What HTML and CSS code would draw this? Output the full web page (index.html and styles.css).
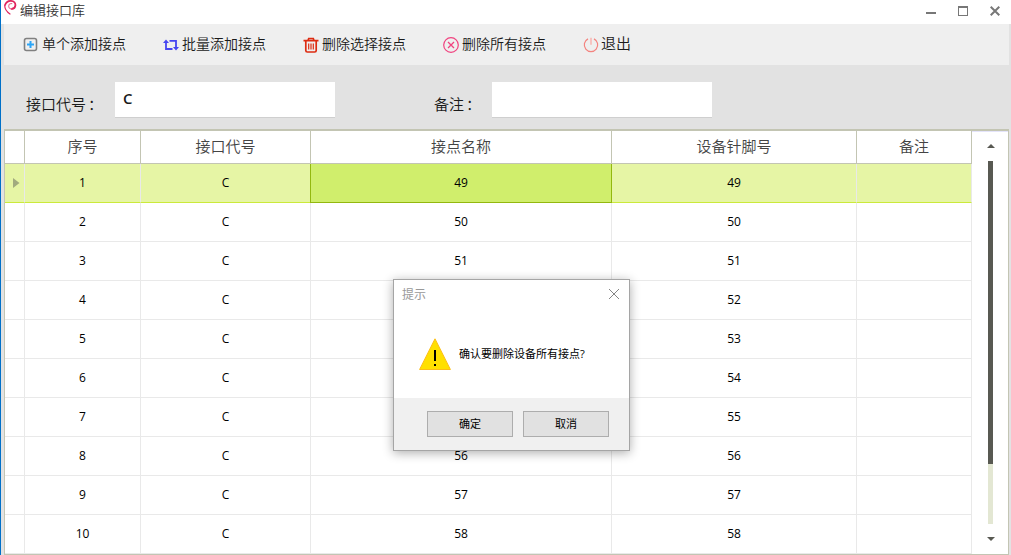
FILE: index.html
```html
<!DOCTYPE html>
<html lang="zh-CN">
<head>
<meta charset="utf-8">
<title>编辑接口库</title>
<link rel="stylesheet" href="styles.css">
</head>
<body>
<div class="window">
  <header class="titlebar">
    <svg class="logo" width="14" height="16" viewBox="0 0 14 16" fill="none" stroke="#e0245e" stroke-linecap="round"><path stroke-width="1.200" d="M6 14C2.500 11.500.6 8.500.800 5.500"/><path stroke-width="1.800" d="M1 5C2.200 2 4.500.8 7 .9c3 .1 4.600 2 4.400 4.500-.2 2.100-1.700 3.500-3.700 3.600"/><path stroke="#e86a90" stroke-width="1.100" d="M7.700 9C5.900 9 4.700 7.800 4.700 6.200c0-1.700 1.300-2.900 3.100-2.600"/></svg>
    <h1 class="title">编辑接口库</h1>
    <div class="controls">
      <svg width="10" height="12" viewBox="0 0 10 12"><path d="M0 7h10v2H0z" fill="#777"/></svg>
      <svg width="10" height="12" viewBox="0 0 10 12"><path d="M0 1h10v10H0zM1 3v7h8V3z" fill="#777" fill-rule="evenodd"/></svg>
      <svg width="10" height="12" viewBox="0 0 10 12"><path d="M.7 1.700l8.600 8.600M9.300 1.700L.7 10.300" stroke="#777" stroke-width="2"/></svg>
    </div>
  </header>
  <nav class="toolbar">
    <div class="tool"><svg width="16" height="16" viewBox="0 0 16 16"><rect x="1.500" y="1.500" width="12" height="12" rx="2" fill="none" stroke="#808080" stroke-width="1.600"/><path d="M7.500 4v7M4 7.500h7" stroke="#2ba5f7" stroke-width="2"/></svg><span>单个添加接点</span></div>
    <div class="tool"><svg width="16" height="16" viewBox="0 0 16 16" fill="none" stroke="#4646f0" stroke-width="1.800"><path d="M3 4.500V12h6.500M6.500 3.800H13V11.500"/><path d="M0 6L3 2.500l3 3.500zM10 10L13 13.500l3-3.500z" fill="#4646f0" stroke="none"/></svg><span>批量添加接点</span></div>
    <div class="tool"><svg width="16" height="16" viewBox="0 0 16 16" fill="none" stroke="#dd2c12"><path stroke-width="1.700" d="M.5 3.700h15M5 3.500l.7-2h4.600l.7 2M2.800 4v9.500q0 1.500 1.500 1.500h7.400q1.500 0 1.500-1.500V4"/><path stroke-width="1.200" d="M5.700 6.500v6M8 6.500v6M10.300 6.500v6"/></svg><span>删除选择接点</span></div>
    <div class="tool"><svg width="16" height="16" viewBox="0 0 16 16" fill="none" stroke="#f0437f"><circle cx="8" cy="8" r="7.300" stroke-width="1.200"/><path stroke-width="1.300" d="M5 5l6 6M11 5l-6 6"/></svg><span>删除所有接点</span></div>
    <div class="tool exit"><svg width="16" height="16" viewBox="0 0 16 16" fill="none" stroke="#f4837f"><path stroke-width="1.200" d="M5 1.900a6.700 6.700 0 1 0 6 0"/><path stroke="#f9b5b1" stroke-width="1.500" d="M8 .8v7"/></svg><span>退出</span></div>
  </nav>
  <section class="form">
    <label class="field code"><span class="label">接口代号<span class="colon">：</span></span><span class="input">C</span></label>
    <label class="field note"><span class="label">备注<span class="colon">：</span></span><span class="input"></span></label>
  </section>
  <main class="grid">
    <div class="table">
      <div class="row head"><div></div><div>序号</div><div>接口代号</div><div>接点名称</div><div>设备针脚号</div><div>备注</div></div>
      <div class="row selected"><div><svg class="marker" width="7" height="10" viewBox="0 0 7 10"><path d="M0 0l6.500 5L0 10z" fill="#a2ab7e"/></svg></div><div>1</div><div>C</div><div class="current">49</div><div>49</div><div></div></div>
      <div class="row"><div></div><div>2</div><div>C</div><div>50</div><div>50</div><div></div></div>
      <div class="row"><div></div><div>3</div><div>C</div><div>51</div><div>51</div><div></div></div>
      <div class="row"><div></div><div>4</div><div>C</div><div>52</div><div>52</div><div></div></div>
      <div class="row"><div></div><div>5</div><div>C</div><div>53</div><div>53</div><div></div></div>
      <div class="row"><div></div><div>6</div><div>C</div><div>54</div><div>54</div><div></div></div>
      <div class="row"><div></div><div>7</div><div>C</div><div>55</div><div>55</div><div></div></div>
      <div class="row"><div></div><div>8</div><div>C</div><div>56</div><div>56</div><div></div></div>
      <div class="row"><div></div><div>9</div><div>C</div><div>57</div><div>57</div><div></div></div>
      <div class="row"><div></div><div>10</div><div>C</div><div>58</div><div>58</div><div></div></div>
    </div>
    <div class="scrollbar">
      <svg width="8" height="4" viewBox="0 0 8 4"><path d="M0 4l4-4 4 4z" fill="#585952"/></svg>
      <div class="track"><div class="thumb"></div></div>
      <svg width="8" height="4" viewBox="0 0 8 4"><path d="M0 0h8L4 4z" fill="#585952"/></svg>
    </div>
  </main>
  <div class="dialog" role="dialog">
    <div class="dialog-title"><span>提示</span><svg width="12" height="12" viewBox="0 0 12 12"><path d="M1 1l10 10M11 1L1 11" stroke="#858585" stroke-width="1"/></svg></div>
    <div class="dialog-body">
      <svg width="32" height="33" viewBox="0 0 32 33"><path d="M16 .8L31.400 31.500H.6z" fill="#ffe000" stroke="#fdbd17"/><path d="M15 12h2v11h-2zM15 26h2v2h-2z" fill="#000"/></svg>
      <span>确认要删除设备所有接点?</span>
    </div>
    <div class="dialog-footer"><div class="button">确定</div><div class="button">取消</div></div>
  </div>
</div>
</body>
</html>
```
FILE: styles.css
```css
* { box-sizing: border-box; }
body { margin: 0; font-family: "Open Sans", "Noto Sans CJK SC", sans-serif; color: #1a1a1a; }
svg { display: block; flex: none; }
.window { position: relative; width: 1011px; height: 555px; overflow: hidden; border-left: 1px solid #0070c8; background: #e2e2e2; display: flex; flex-direction: column; }
.titlebar { height: 24px; flex: none; background: #fff; display: flex; padding-left: 3px; }
.title { margin: 0 0 0 2px; font-size: 13px; font-weight: 350; line-height: 20px; color: #333; }
.controls { margin-left: auto; display: flex; gap: 22px; padding: 5px 11px 0 0; }
.toolbar { height: 41px; flex: none; margin: 0 2px 0 3px; padding-left: 19px; background: #efefef; display: flex; }
.tool { width: 140px; display: flex; align-items: center; gap: 3px; font-size: 14px; font-weight: 350; line-height: 20px; white-space: nowrap; }
.tool span { padding-bottom: 2px; }
.exit { font-size: 15px; gap: 2px; }
.exit span { padding-bottom: 4px; }
.form { height: 64px; flex: none; display: flex; padding: 17px 0 0 25px; }
.field { display: flex; }
.code { width: 408px; }
.label { font-size: 15px; font-weight: 350; line-height: 20px; padding-top: 12px; white-space: nowrap; }
.colon { padding-left: 2px; }
.code .label { width: 89px; }
.note .label { width: 58px; }
.input { width: 220px; height: 36px; background: #fff; border-bottom: 1px solid #cfcfcf; padding-left: 8px; font-size: 15px; line-height: 33px; font-weight: 600; }
.grid { flex: none; height: 426px; margin: 0 2px 0 3px; border: 1px solid #c3c5b3; border-top-width: 2px; background: #fff; display: flex; }
.table { width: 967px; flex: none; }
.row { display: grid; grid-template-columns: 20px 116px 170px 301px 245px 115px; height: 39px; font-size: 12px; line-height: 18px; color: #000; }
.row > div { display: flex; align-items: center; justify-content: center; border-right: 1px solid #e9e9e9; border-bottom: 1px solid #e9e9e9; }
.head { height: 33px; font-size: 15px; font-weight: 350; color: #444; }
.head > div { border-color: #c3c5b3; padding-bottom: 2px; }
.selected > div { background: #e6f5a5; border-bottom-color: #cbea3b; }
.row .current { background: #d0ee6c; border-color: #93b80f; box-shadow: -1px 0 #93b80f; }
.marker { margin-left: 3px; }
.scrollbar { flex: 1; display: flex; flex-direction: column; align-items: center; padding: 12px 0 0 1px; border-top: 1px solid #e4e4fa; }
.track { width: 5px; height: 363px; margin: 13px 0; background: #e3e7d3; }
.thumb { height: 303px; background: #585952; }
.dialog { position: absolute; left: 392px; top: 279px; width: 237px; height: 172px; border: 1px solid #a5a5a5; background: #fff; box-shadow: 0 2px 10px rgba(0,0,0,.32); display: flex; flex-direction: column; color: #000; font-size: 11px; }
.dialog-title { height: 28px; display: flex; align-items: center; justify-content: space-between; padding: 0 9px 0 8px; color: #999; font-size: 12px; }
.dialog-body { flex: 1; display: flex; align-items: flex-start; padding: 30px 0 0 25px; gap: 8px; white-space: nowrap; line-height: 32px; }
.dialog-footer { height: 52px; background: #f0f0f0; display: flex; justify-content: flex-end; gap: 10px; padding: 13px 20px 0 0; }
.button { width: 86px; height: 26px; border: 1px solid #adadad; background: #e1e1e1; text-align: center; line-height: 24px; }
```
